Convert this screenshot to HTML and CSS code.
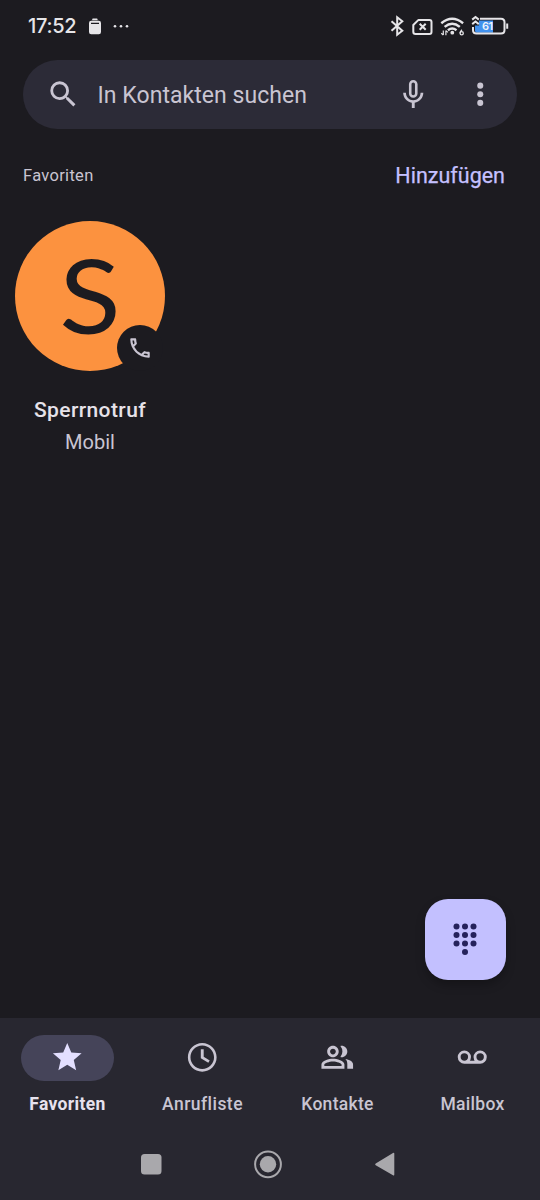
FILE: index.html
```html
<!DOCTYPE html>
<html lang="de">
<head>
<meta charset="utf-8">
<title>Kontakte</title>
<link rel="stylesheet" href="styles.css">
</head>
<body>
<div class="screen">
  <header class="status">
    <span class="time">17:52</span>
    <svg class="status-left" width="44" height="20" viewBox="0 0 44 20" fill="#e6e5e8">
      <path d="M4.200 1.400Q4.200.6 5 .6h3.800Q9.600.6 9.600 1.400V2.200H4.200z"/>
      <path fill-rule="evenodd" d="M3 2.800h7.800Q13 2.800 13 5v9q0 2.200-2.200 2.200H3.200q-2.200 0-2.200-2.200V5q0-2.200 2.200-2.200zM3 4.800v1.300h8V4.800z"/>
      <circle cx="27" cy="8.200" r="1.300"/><circle cx="33" cy="8.200" r="1.300"/><circle cx="39" cy="8.200" r="1.300"/>
    </svg>
    <svg class="status-right" width="122" height="24" viewBox="388 14 122 24" fill="none" stroke="#e6e5e8" stroke-width="2">
      <path d="M391.500 21.200 402.300 30.700 397.200 34.700V17.300l5.100 4-10.800 9.500"/>
      <path stroke-linejoin="round" d="M418.500 19.900h11q2 0 2 2v10q0 2-2 2h-14q-2.200 0-2.200-2.200V25z"/>
      <path d="m419.700 23.700 6 6m0-6-6 6"/>
      <path stroke-width="2.400" d="M441.300 23.200q10.900-9 21.800 0M444.600 26.800q7.600-6.300 15.200 0M447.900 30.200q4.300-3.400 8.600 0"/>
      <circle cx="452.300" cy="32.700" r="1.900" fill="#e6e5e8" stroke="none"/>
      <path stroke-width="1.200" d="M443.300 30.500v4.600m-2-1.800 2 1.800M445.900 35.200v-4.600m2 1.800-2-1.800"/>
      <path stroke-width="1.300" d="M462 29.800q-2 1.600-2 3.500"/><circle cx="461.700" cy="33.300" r="1.600" stroke-width="1.300"/>
      <path fill="#4191ee" stroke="none" d="M475 25.500h4v-5h14v12.200H477q-2 0-2-2z"/>
      <path d="M480 18.800h21q3.500 0 3.500 3.500v7.800q0 3.500-3.500 3.500h-24.500q-3.500 0-3.500-3.500V27"/>
      <path d="M507.200 23.500v5.300M472.200 19.600l3.300-2.600 3.300 2.600M472.200 24.100l3.300-2.600 3.300 2.600"/>
      <text class="battery" x="482" y="30.300">61</text>
    </svg>
  </header>

  <div class="search">
    <svg class="icon" viewBox="0 0 24 24"><path d="M15.500 14h-.79l-.28-.27A6.471 6.471 0 0 0 16 9.500 6.500 6.500 0 1 0 9.500 16c1.610 0 3.090-.59 4.230-1.570l.27.28v.79l5 4.990L20.490 19zm-6 0C7.010 14 5 11.990 5 9.500S7.010 5 9.500 5 14 7.010 14 9.500 11.990 14 9.500 14z"/></svg>
    <span class="hint">In Kontakten suchen</span>
    <svg class="icon mic" viewBox="0 0 24 24"><path fill-rule="evenodd" d="M12 14.500c1.660 0 3-1.340 3-3V5c0-1.660-1.340-3-3-3S9 3.340 9 5v6.500c0 1.660 1.340 3 3 3zM10.800 5c0-.66.54-1.200 1.200-1.200s1.200.54 1.200 1.200v6.500c0 .66-.54 1.200-1.200 1.200s-1.200-.54-1.200-1.200zM17.100 11c0 2.900-2.200 5.200-5.100 5.200S6.900 13.900 6.900 11H5c0 3.530 2.600 6.430 6 6.920V21.500h2v-3.580c3.400-.49 6-3.390 6-6.920z"/></svg>
    <svg class="icon" viewBox="0 0 24 24"><circle cx="12" cy="6" r="2.100"/><circle cx="12" cy="12" r="2.100"/><circle cx="12" cy="18" r="2.100"/></svg>
  </div>

  <div class="section-head">
    <span class="section-title">Favoriten</span>
    <span class="add">Hinzufügen</span>
  </div>

  <main class="favorites">
    <div class="contact">
      <div class="avatar">
        <span class="initial">S</span>
        <span class="badge"><svg width="26" height="26" viewBox="0 0 24 24"><path d="M6.540 5c.06.89.21 1.760.45 2.590l-1.200 1.200c-.41-1.200-.67-2.470-.76-3.790h1.510m9.860 12.020c.85.24 1.720.39 2.600.45v1.490c-1.320-.09-2.590-.35-3.800-.75l1.200-1.190M7.500 3H4c-.55 0-1 .45-1 1 0 9.390 7.610 17 17 17 .55 0 1-.45 1-1v-3.490c0-.55-.45-1-1-1-1.240 0-2.450-.2-3.570-.57a1.020 1.020 0 0 0-1.020.24l-2.200 2.200a15.149 15.149 0 0 1-6.590-6.590l2.200-2.200c.28-.28.360-.67.250-1.020A11.360 11.360 0 0 1 8.500 4c0-.55-.45-1-1-1z"/></svg></span>
      </div>
      <div class="name">Sperrnotruf</div>
      <div class="kind">Mobil</div>
    </div>
  </main>

  <button class="fab" aria-label="Wähltasten">
    <svg width="34" height="34" viewBox="0 0 34 34" fill="#25225b">
      <circle cx="8.500" cy="4.500" r="3"/><circle cx="17" cy="4.500" r="3"/><circle cx="25.500" cy="4.500" r="3"/>
      <circle cx="8.500" cy="13" r="3"/><circle cx="17" cy="13" r="3"/><circle cx="25.500" cy="13" r="3"/>
      <circle cx="8.500" cy="21.500" r="3"/><circle cx="17" cy="21.500" r="3"/><circle cx="25.500" cy="21.500" r="3"/>
      <circle cx="17" cy="30" r="3"/>
    </svg>
  </button>

  <footer class="bottom">
    <nav class="tabs">
      <div class="tab active">
        <span class="pill"><svg class="icon" viewBox="0 0 24 24"><path d="M12 17.270 18.180 21l-1.640-7.030L22 9.240l-7.190-.61L12 2 9.190 8.630 2 9.240l5.460 4.730L5.820 21z"/></svg></span>
        <span class="label l-fav">Favoriten</span>
      </div>
      <div class="tab">
        <span class="pill"><svg class="icon" viewBox="0 0 24 24"><path d="M11.990 2C6.470 2 2 6.480 2 12s4.470 10 9.990 10C17.520 22 22 17.520 22 12S17.520 2 11.990 2zM12 20.200c-4.530 0-8.200-3.670-8.200-8.200S7.470 3.800 12 3.800s8.200 3.670 8.200 8.200-3.670 8.200-8.200 8.200zM13 6.500h-2v6.200l5.200 3.200 1-1.650-4.200-2.550z"/></svg></span>
        <span class="label l-calls">Anrufliste</span>
      </div>
      <div class="tab">
        <span class="pill"><svg class="icon" viewBox="0 0 24 24"><path d="M17.600 13.300C18.700 14.200 19 15.320 19 17v3h4v-3c0-2-2.600-3.200-5.400-3.700zM15 12c2.210 0 4-1.790 4-4s-1.790-4-4-4c-.3 0-.5 0-.8.1a6.200 6.200 0 0 1 0 7.800c.3.1.5.1.8.1zM9 12c2.210 0 4-1.790 4-4s-1.790-4-4-4-4 1.790-4 4 1.790 4 4 4zm0-6c1.100 0 2 .9 2 2s-.9 2-2 2-2-.9-2-2 .9-2 2-2zM9 13c-2.670 0-8 1.340-8 4v3h16v-3c0-2.660-5.330-4-8-4zm6 5H3v-.99C3.200 16.290 6.300 15 9 15s5.800 1.290 6 2z"/></svg></span>
        <span class="label l-people">Kontakte</span>
      </div>
      <div class="tab">
        <span class="pill"><svg class="icon" viewBox="0 0 24 24"><path fill="none" stroke="#c9c5d2" stroke-width="2" d="M6.500 15.500h11M6.500 8.300a3.600 3.600 0 1 0 0 7.200 3.600 3.600 0 1 0 0-7.200zM17.500 8.300a3.600 3.600 0 1 0 0 7.200 3.600 3.600 0 1 0 0-7.200z"/></svg></span>
        <span class="label l-mail">Mailbox</span>
      </div>
    </nav>
    <div class="system">
      <svg width="258" height="30" viewBox="0 0 258 30" fill="#a9a8ac">
        <rect x="4" y="5" width="20.500" height="20.500" rx="3.500"/>
        <circle cx="131" cy="15.300" r="12.900" fill="none" stroke="#a9a8ac" stroke-width="2"/><circle cx="131" cy="15.300" r="8.200"/>
        <path d="M257.300 4.700v20.800q0 1.500-1.300.7L238.700 16.300q-1.200-.9 0-1.800L256 4q1.300-.8 1.300.7z"/>
      </svg>
    </div>
  </footer>
</div>
</body>
</html>
```

FILE: styles.css
```css
* { box-sizing: border-box; }
body { margin: 0; background: #1c1b20; font-family: Roboto, "Liberation Sans", sans-serif; color: #c9c5d2; }
.screen { position: relative; display: flex; flex-direction: column; width: 540px; height: 1200px; overflow: hidden; }
.screen span, .name, .kind { white-space: nowrap; }

.status { display: flex; align-items: flex-start; height: 60px; padding: 14px 30px 0 28px; color: #e6e5e8; }
.time { width: 60px; font: 500 20px/25px Inter, sans-serif; letter-spacing: -0.3px; }
.status-left { margin-top: 4px; }
.status-right { margin-left: auto; }
.battery { font: 600 11px Inter, sans-serif; letter-spacing: -0.5px; fill: #f0f4fa; stroke: none; }

.icon { flex: none; width: 34.500px; height: 34.500px; fill: #c9c5d2; }

.search { display: flex; align-items: center; height: 69px; margin: 0 23px; padding: 0 20px 0 23px; border-radius: 35px; background: #2c2b37; }
.hint { flex: 1; margin-left: 17px; padding-top: 2px; font-size: 23px; line-height: 30px; letter-spacing: .05px; }
.mic { margin-right: 32px; }

.section-head { display: flex; justify-content: space-between; align-items: center; height: 92px; padding: 0 35px 0 23px; }
.section-title { font-size: 16.500px; letter-spacing: .3px; }
.add { padding-top: 1px; font-size: 21.500px; color: #c4c0ff; -webkit-text-stroke: .25px #c4c0ff; }

.favorites { padding-left: 15px; }
.contact { width: 150px; text-align: center; }
.avatar { position: relative; display: flex; align-items: center; justify-content: center; width: 150px; height: 150px; border-radius: 50%; background: #fc923f; }
.initial { color: #1c1b20; font-family: Lato, sans-serif; font-size: 103px; font-weight: 400; line-height: 150px; transform: translateY(-2px) scaleX(1.1); }
.badge { position: absolute; left: 101.500px; top: 103.500px; display: flex; align-items: center; justify-content: center; width: 46px; height: 46px; border-radius: 50%; background: #1c1b20; }
.badge svg { fill: #c9c5d2; }
.name { margin-top: 23px; font-size: 21px; font-weight: 500; line-height: 32px; letter-spacing: .4px; color: #e6e2e9; }
.kind { font-size: 20px; line-height: 33px; }

.fab { position: absolute; left: 425px; top: 899px; display: flex; align-items: center; justify-content: center; width: 80.500px; height: 80.500px; padding: 0; border: 0; border-radius: 23px; background: #c3c0ff; box-shadow: 0 5px 10px rgba(0, 0, 0, .25); }

.bottom { height: 182.500px; margin-top: auto; background: #282730; }
.tabs { display: flex; height: 110.500px; padding-top: 17px; }
.tab { display: flex; flex: 1; flex-direction: column; align-items: center; }
.pill { display: flex; align-items: center; justify-content: center; width: 92.500px; height: 46px; border-radius: 23px; }
.active .pill { background: #454459; }
.active .icon { fill: #e3dfff; }
.label { margin-top: 11px; font-size: 17.500px; font-weight: 500; line-height: 24px; }
.active .label { font-weight: 700; color: #e6e2ee; }
.l-fav { letter-spacing: .35px; }
.l-calls { letter-spacing: .45px; }
.l-people { letter-spacing: .3px; }
.l-mail { letter-spacing: .3px; }
.system { display: flex; margin-left: 137px; padding-top: 21px; }
```
